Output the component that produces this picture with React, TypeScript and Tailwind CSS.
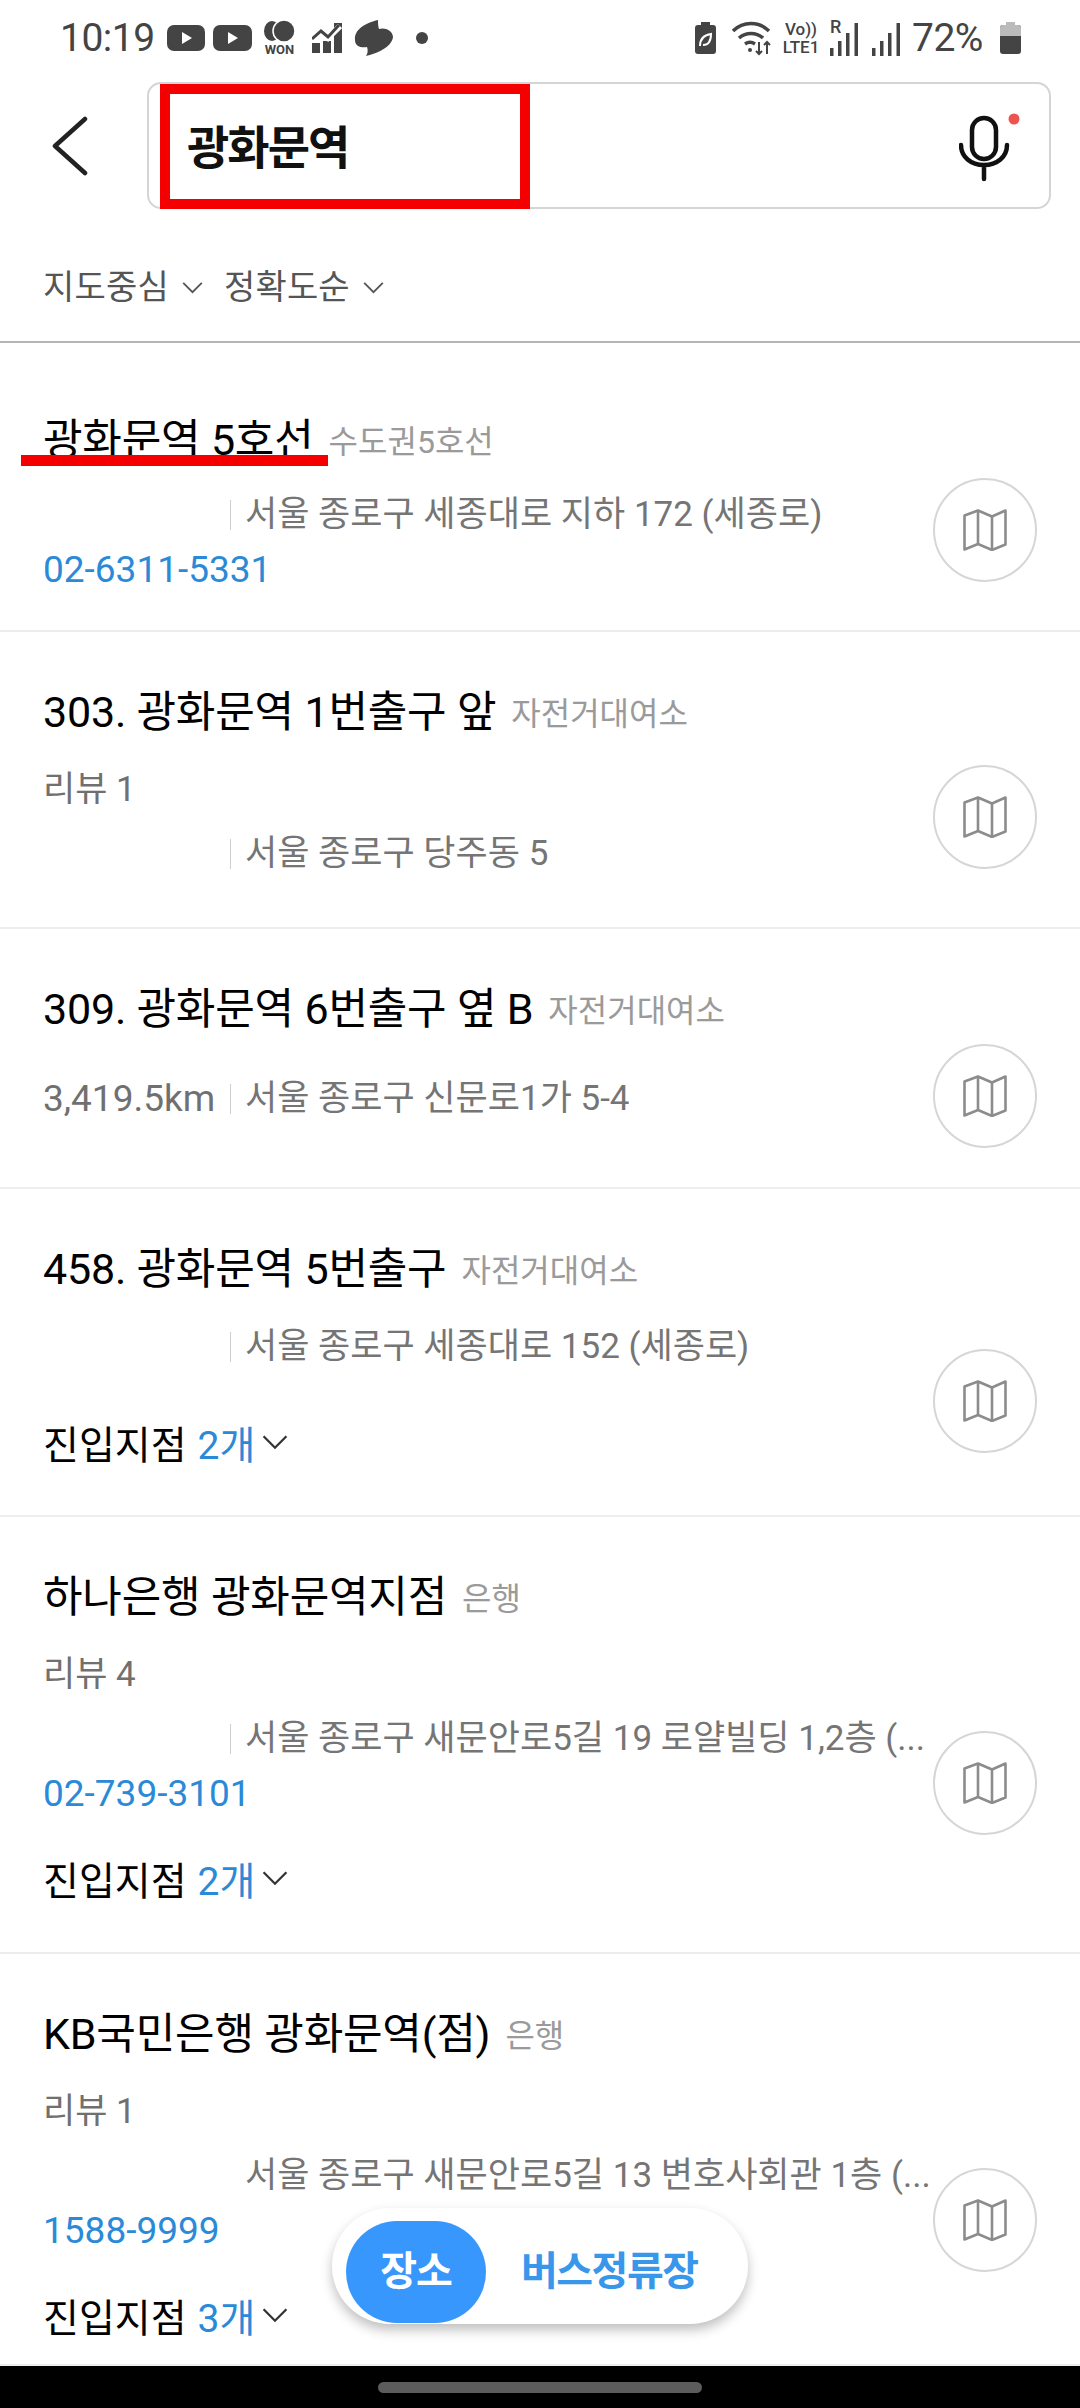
const SANS = "font-['Roboto','Noto_Sans_CJK_KR',sans-serif]";

type Place = {
  title: string;
  category: string;
  review?: string;
  distance?: string;
  address: string;
  divider?: boolean;
  phone?: string;
  entrances?: string;
  rowClass: string;
  addressClass: string;
  circleClass: string;
};

const places: Place[] = [
  {
    title: '광화문역 5호선',
    category: '수도권5호선',
    address: '서울 종로구 세종대로 지하 172 (세종로)',
    divider: true,
    phone: '02-6311-5331',
    rowClass: 'h-[289px] pt-[72px]',
    addressClass: 'mt-[30px]',
    circleClass: 'mt-[63px]',
  },
  {
    title: '303. 광화문역 1번출구 앞',
    category: '자전거대여소',
    review: '리뷰 1',
    address: '서울 종로구 당주동 5',
    divider: true,
    rowClass: 'h-[297px] pt-[55px]',
    addressClass: 'mt-[24px]',
    circleClass: 'mt-[78px]',
  },
  {
    title: '309. 광화문역 6번출구 옆 B',
    category: '자전거대여소',
    distance: '3,419.5km',
    address: '서울 종로구 신문로1가 5-4',
    divider: true,
    rowClass: 'h-[260px] pt-[55px]',
    addressClass: 'mt-[45px]',
    circleClass: 'mt-[60px]',
  },
  {
    title: '458. 광화문역 5번출구',
    category: '자전거대여소',
    address: '서울 종로구 세종대로 152 (세종로)',
    divider: true,
    entrances: '2개',
    rowClass: 'h-[328px] pt-[55px]',
    addressClass: 'mt-[33px]',
    circleClass: 'mt-[105px]',
  },
  {
    title: '하나은행 광화문역지점',
    category: '은행',
    review: '리뷰 4',
    address: '서울 종로구 새문안로5길 19 로얄빌딩 1,2층 (...',
    divider: true,
    phone: '02-739-3101',
    entrances: '2개',
    rowClass: 'h-[437px] pt-[55px]',
    addressClass: 'mt-[24px]',
    circleClass: 'mt-[159px]',
  },
  {
    title: 'KB국민은행 광화문역(점)',
    category: '은행',
    review: '리뷰 1',
    address: '서울 종로구 새문안로5길 13 변호사회관 1층 (...',
    phone: '1588-9999',
    entrances: '3개',
    rowClass: 'h-[412px] pt-[55px]',
    addressClass: 'mt-[24px]',
    circleClass: 'mt-[159px]',
  },
];

const Chevron = ({ className }: { className: string }) => (
  <svg viewBox="0 0 24 14" className={className} fill="none" stroke="currentColor" strokeWidth="2">
    <path d="M2 2l10 10L22 2" />
  </svg>
);

const StatusLeft = () => (
  <div className="flex items-center">
    <span className={`${SANS} text-[39px] leading-none text-[#444] tracking-[-0.5px] w-[107px]`}>10:19</span>
    <svg viewBox="0 0 85 26" className="w-[85px] h-[26px]">
      <rect width="38" height="26" rx="7" fill="#444" />
      <path d="M15 7l10 6-10 6z" fill="#fff" />
      <rect x="46" width="39" height="26" rx="7" fill="#444" />
      <path d="M61 7l10 6-10 6z" fill="#fff" />
    </svg>
    <div className="ml-[10px] w-[35px] flex flex-col items-center">
      <svg viewBox="0 0 35 23" className="w-[35px] h-[23px]">
        <ellipse cx="10" cy="11" rx="8" ry="10" fill="#444" />
        <ellipse cx="22" cy="11" rx="11" ry="11" fill="#444" stroke="#fff" strokeWidth="1.5" />
      </svg>
      <span className="text-[13px] leading-[14px] font-bold text-[#444]">WON</span>
    </div>
    <svg viewBox="0 0 30 30" className="w-[30px] h-[30px] ml-[15px]">
      <path d="M0 30V20h8v10zM11 30V18h8v12zM22 30V0h8v30z" fill="#444" />
      <path d="M-1 17l10-8 7 6L28 3" fill="none" stroke="#fff" strokeWidth="6" />
      <path d="M0 16l9-8 7 6L27 2" fill="none" stroke="#444" strokeWidth="3" />
    </svg>
    <svg viewBox="0 0 40 36" className="w-[40px] h-[36px] ml-[12px]">
      <path d="M24 0C12 3 0 9 1 20c0 7 7 8 12 7 1 3 1 6-1 9 10-2 26-9 27-19 0-7-9-10-14-8-1-3-1-6-1-9z" fill="#444" />
    </svg>
    <span className="w-[12px] h-[12px] rounded-full bg-[#444] ml-[22px]" />
  </div>
);

const SignalBars = () => (
  <svg viewBox="0 0 28 36" className="w-[28px] h-[36px]" fill="#444">
    <rect x="0" y="28" width="3.500" height="8" />
    <rect x="8" y="21" width="3.500" height="15" />
    <rect x="16" y="13" width="3.500" height="23" />
    <rect x="24.500" y="3" width="3.500" height="33" />
  </svg>
);

const StatusRight = () => (
  <div className="flex items-center">
    <svg viewBox="0 0 21 32" className="w-[21px] h-[32px]">
      <rect x="6" width="9" height="4" fill="#444" />
      <rect y="3" width="21" height="29" rx="3" fill="#444" />
      <path d="M5 24c0-7 4-11 11-12 0 7-2 11-8 11" fill="none" stroke="#fff" strokeWidth="2" />
    </svg>
    <svg viewBox="0 0 40 36" className="w-[40px] h-[36px] ml-[16px]" fill="none" stroke="#444" strokeWidth="3.500">
      <path d="M1 11c10-10 26-10 36 0" />
      <path d="M7 18c7-6 17-6 24 0" />
      <path d="M13 24c3-2 7-2 10 0" />
      <circle cx="18" cy="30" r="2" fill="#444" stroke="none" />
      <path d="M27 22v12M24 31l3 3 3-3M35 34V22M32 25l3-3 3 3" strokeWidth="2" />
    </svg>
    <span className={`${SANS} ml-[9px] w-[40px] text-[17px] leading-[18px] font-medium text-[#444] text-center`}>
      Vo))
      <br />
      LTE1
    </span>
    <div className="relative ml-[9px]">
      <span className="absolute left-0 top-[-2px] text-[18px] leading-[18px] font-medium text-[#444]">R</span>
      <SignalBars />
    </div>
    <div className="ml-[14px]">
      <SignalBars />
    </div>
    <span className={`${SANS} ml-[12px] w-[80px] text-[39px] leading-none text-[#444] tracking-[-0.5px] whitespace-nowrap`}>72%</span>
    <svg viewBox="0 0 21 32" className="w-[21px] h-[32px] ml-[8px]">
      <rect x="6" width="9" height="4" fill="#bbb" />
      <rect y="3" width="21" height="29" rx="3" fill="#444" />
      <path d="M0 14V6a3 3 0 0 1 3-3h15a3 3 0 0 1 3 3v8z" fill="#bbb" />
    </svg>
  </div>
);

const MapButton = ({ className }: { className: string }) => (
  <div className={`${className} w-[104px] h-[104px] shrink-0 rounded-full border-2 border-[#d6d6d6] flex items-center justify-center`}>
    <svg viewBox="0 0 44 42" className="w-[44px] h-[42px]" fill="none" stroke="#8c8c8c" strokeWidth="2.600" strokeLinejoin="round">
      <path d="M1.500 6.500L15 1.500l14 6 13.500-6v34L29 41l-14-6-13.500 5.500z" />
      <path d="M15 1.500V35M29 7.500V41" />
    </svg>
  </div>
);

const PlaceRow = ({ place }: { place: Place }) => (
  <div className={`${place.rowClass} shrink-0 border-b-2 border-[#ededed] pl-[43px] pr-[43px] flex gap-2 overflow-hidden`}>
    <div className="flex-1 min-w-0">
      <div className="h-[50px] flex items-center whitespace-nowrap">
        <span className="text-[43px] text-black tracking-[-0.2px]">{place.title}</span>
        <span className="ml-[15px] mt-[3px] text-[32px] text-[#9a9a9a]">{place.category}</span>
      </div>
      {place.review ? (
        <div className="mt-[33px] h-[40px] flex items-center text-[35px] text-[#707070]">{place.review}</div>
      ) : null}
      <div className={`${place.addressClass} h-[40px] flex items-center`}>
        <span className="w-[172px] shrink-0 text-[37px] text-[#707070] whitespace-nowrap">{place.distance}</span>
        <span className={`${place.divider ? 'bg-[#cfcfcf]' : 'bg-transparent'} ml-[15px] w-[1px] h-[30px] shrink-0`} />
        <span className="ml-[14px] text-[35px] text-[#757575] whitespace-nowrap">{place.address}</span>
      </div>
      {place.phone ? (
        <div className="mt-[15px] h-[40px] flex items-center text-[37px] text-[#2b8ad8]">{place.phone}</div>
      ) : null}
      {place.entrances ? (
        <div className={`${place.phone ? 'mt-[46px]' : 'mt-[57px]'} h-[44px] flex items-center text-[39px] text-black`}>
          <span>진입지점</span>
          <span className="ml-[11px] text-[#2b8ad8]">{place.entrances}</span>
          <Chevron className="ml-[6px] mb-[8px] w-[28px] h-[16px] text-[#333]" />
        </div>
      ) : null}
    </div>
    <MapButton className={place.circleClass} />
  </div>
);

export default function App() {
  return (
    <div className={`${SANS} relative w-[1080px] h-[2408px] bg-white overflow-hidden flex flex-col`}>
      <div className="h-[78px] shrink-0 pl-[60px] pr-[59px] pb-[2px] flex items-center justify-between">
        <StatusLeft />
        <StatusRight />
      </div>

      <div className="h-[135px] shrink-0 flex items-center pl-[52px] pr-[29px]">
        <svg viewBox="0 0 36 60" className="w-[36px] h-[60px]" fill="none" stroke="#222" strokeWidth="4.500" strokeLinecap="round" strokeLinejoin="round">
          <path d="M33 3L3 30l30 27" />
        </svg>
        <div className="ml-[59px] flex-1 h-[127px] rounded-[14px] border-2 border-[#d5d5d5] flex items-center justify-between pl-[38px] pr-[29px]">
          <span className="mt-[5px] text-[46px] font-bold text-[#111] tracking-[-2px]">광화문역</span>
          <svg viewBox="0 0 61 70" className="w-[61px] h-[70px] mt-[3px]" fill="none" stroke="#111" strokeWidth="4.500" strokeLinecap="round">
            <rect x="13" y="6" width="24" height="41" rx="12" />
            <path d="M2 33c0 12 10 20 23 20s23-8 23-20M25 53v14" />
            <circle cx="55" cy="7" r="5.500" fill="#ef5350" stroke="none" />
          </svg>
        </div>
      </div>

      <div className="h-[130px] shrink-0 pl-[43px] pt-[49px] flex items-start border-b-2 border-[#b5b5b5]">
        <div className="flex items-center text-[34px] text-[#555] tracking-[0.2px]">
          <span>지도중심</span>
          <Chevron className="ml-[12px] w-[23px] h-[13px] text-[#555]" />
          <span className="ml-[20px]">정확도순</span>
          <Chevron className="ml-[12px] w-[23px] h-[13px] text-[#555]" />
        </div>
      </div>

      <div className="flex-1 min-h-0 overflow-hidden flex flex-col">
        {places.map((place) => (
          <PlaceRow key={place.title} place={place} />
        ))}
      </div>

      <div className="h-[42px] shrink-0 bg-black flex items-center justify-center">
        <div className="w-[324px] h-[11px] rounded-full bg-[#5c5c5c]" />
      </div>

      {/* red annotations drawn over the screenshot */}
      <div className="absolute left-[160px] top-[84px] w-[370px] h-[125px] border-[10px] border-[#f50000]" />
      <div className="absolute left-[21px] top-[455px] w-[307px] h-[11px] bg-[#f50000]" />

      <div className="absolute left-[332px] top-[2208px] w-[416px] h-[116px] rounded-full bg-white shadow-[0_6px_12px_rgba(0,0,0,0.25)] flex items-center pl-[14px]">
        <div className="w-[140px] h-[102px] mt-[12px] rounded-full bg-[#3897fc] flex items-center justify-center text-[40px] font-bold text-white tracking-[-1px]">
          장소
        </div>
        <span className="ml-[35px] mt-[12px] text-[40px] font-bold text-[#3897ea] tracking-[-1.500px]">버스정류장</span>
      </div>
    </div>
  );
}
